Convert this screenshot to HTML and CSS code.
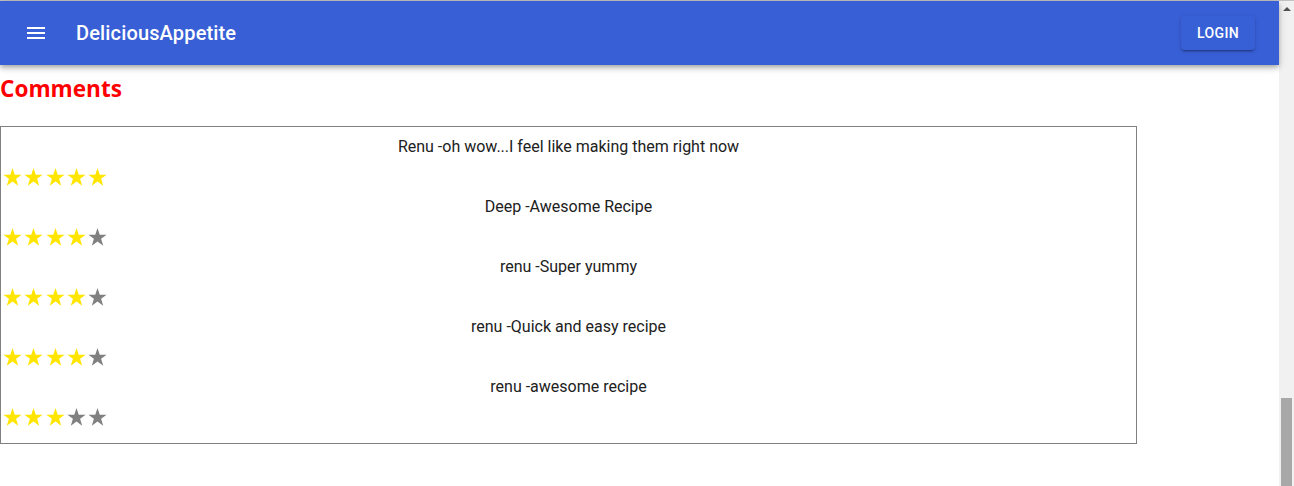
FILE: index.html
```html
<!DOCTYPE html>
<html>
<head>
<meta charset="utf-8">
<link rel="stylesheet" href="styles.css">
</head>
<body>
<svg width="0" height="0" class="defs">
  <defs>
    <symbol id="star" viewBox="0 0 100 97">
      <polygon points="50,0 61.8,35 98,35 69,57 80,93 50,71 20,93 31,57 2,35 38.2,35"/>
    </symbol>
  </defs>
</svg>
<div class="topline"></div>
<div class="page">
  <main class="main">
    <header class="appbar">
      <button class="menu-btn" aria-label="menu">
        <svg width="24" height="24" viewBox="0 0 24 24"><path fill="#fff" d="M3 18h18v-2H3v2zm0-5h18v-2H3v2zm0-7v2h18V6H3z"/></svg>
      </button>
      <div class="title">DeliciousAppetite</div>
      <div class="spacer"></div>
      <button class="login">LOGIN</button>
    </header>
    <h2 class="heading">Comments</h2>
    <section class="box">
      <div class="comment">
        <p class="text">Renu -oh wow...I feel like making them right now</p>
        <div class="stars"><svg class="s on"><use href="#star"/></svg><svg class="s on"><use href="#star"/></svg><svg class="s on"><use href="#star"/></svg><svg class="s on"><use href="#star"/></svg><svg class="s on"><use href="#star"/></svg></div>
      </div>
      <div class="comment">
        <p class="text">Deep -Awesome Recipe</p>
        <div class="stars"><svg class="s on"><use href="#star"/></svg><svg class="s on"><use href="#star"/></svg><svg class="s on"><use href="#star"/></svg><svg class="s on"><use href="#star"/></svg><svg class="s off"><use href="#star"/></svg></div>
      </div>
      <div class="comment">
        <p class="text">renu -Super yummy</p>
        <div class="stars"><svg class="s on"><use href="#star"/></svg><svg class="s on"><use href="#star"/></svg><svg class="s on"><use href="#star"/></svg><svg class="s on"><use href="#star"/></svg><svg class="s off"><use href="#star"/></svg></div>
      </div>
      <div class="comment">
        <p class="text">renu -Quick and easy recipe</p>
        <div class="stars"><svg class="s on"><use href="#star"/></svg><svg class="s on"><use href="#star"/></svg><svg class="s on"><use href="#star"/></svg><svg class="s on"><use href="#star"/></svg><svg class="s off"><use href="#star"/></svg></div>
      </div>
      <div class="comment">
        <p class="text">renu -awesome recipe</p>
        <div class="stars"><svg class="s on"><use href="#star"/></svg><svg class="s on"><use href="#star"/></svg><svg class="s on"><use href="#star"/></svg><svg class="s off"><use href="#star"/></svg><svg class="s off"><use href="#star"/></svg></div>
      </div>
    </section>
  </main>
  <aside class="scrollbar">
    <div class="arrow"></div>
    <div class="track"><div class="thumb"></div></div>
  </aside>
</div>
</body>
</html>
```

FILE: styles.css
```css
html, body {
  margin: 0;
  padding: 0;
  background: #fff;
  overflow: hidden;
}
body {
  font-family: Roboto, "Liberation Sans", sans-serif;
  width: 1294px;
  height: 486px;
}
.defs {
  position: absolute;
  width: 0;
  height: 0;
}
.topline {
  height: 1px;
  background: #c2c2c2;
}
.page {
  display: flex;
  height: 485px;
}
.main {
  flex: 1;
  display: flex;
  flex-direction: column;
  min-width: 0;
}
.appbar {
  height: 64px;
  background: #385fd6;
  display: flex;
  align-items: center;
  padding: 0 24px;
  box-shadow: 0 2px 4px -1px rgba(0,0,0,0.2), 0 4px 5px 0 rgba(0,0,0,0.14), 0 1px 10px 0 rgba(0,0,0,0.12);
  position: relative;
  z-index: 1;
}
.menu-btn {
  margin-left: -12px;
  margin-right: 16px;
  width: 48px;
  height: 48px;
  padding: 12px;
  border: 0;
  background: transparent;
  display: flex;
}
.title {
  color: #fff;
  font-size: 20px;
  font-weight: 500;
  letter-spacing: 0.15px;
}
.spacer {
  flex: 1;
}
.login {
  height: 34px;
  width: 74px;
  border: 0;
  border-radius: 4px;
  background: #375fd6;
  color: #fff;
  font-family: Roboto, sans-serif;
  font-size: 14px;
  font-weight: 500;
  letter-spacing: 0.4px;
  box-shadow: 0 3px 1px -2px rgba(0,0,0,0.2), 0 2px 2px 0 rgba(0,0,0,0.14), 0 1px 5px 0 rgba(0,0,0,0.12);
}
.heading {
  margin: 10px 0 0 0;
  height: 51px;
  font-family: "Open Sans", "DejaVu Sans", sans-serif;
  font-weight: 700;
  font-size: 22.6px;
  line-height: 28px;
  color: #ff0000;
}
.box {
  width: 1135px;
  border: 1px solid #808080;
  padding: 8px 0 8px 0;
}
.comment {
  display: flex;
  flex-direction: column;
}
.text {
  margin: 0;
  text-align: center;
  font-size: 16px;
  line-height: 24px;
  color: #212121;
}
.stars {
  height: 36px;
  display: flex;
  align-items: center;
  padding-left: 2px;
  gap: 2.3px;
}
.s {
  width: 19px;
  height: 18.5px;
}
.s.on { fill: #ffe500; }
.s.off { fill: #808080; }
.scrollbar {
  width: 15px;
  background: #f1f1f1;
  display: flex;
  flex-direction: column;
  align-items: center;
}
.arrow {
  margin-top: 6px;
  width: 0;
  height: 0;
  border-left: 4px solid transparent;
  border-right: 4px solid transparent;
  border-bottom: 4px solid #505050;
}
.track {
  flex: 1;
  width: 11px;
  display: flex;
  flex-direction: column;
  justify-content: flex-end;
}
.thumb {
  height: 88px;
  background: #a8a8a8;
}
```
